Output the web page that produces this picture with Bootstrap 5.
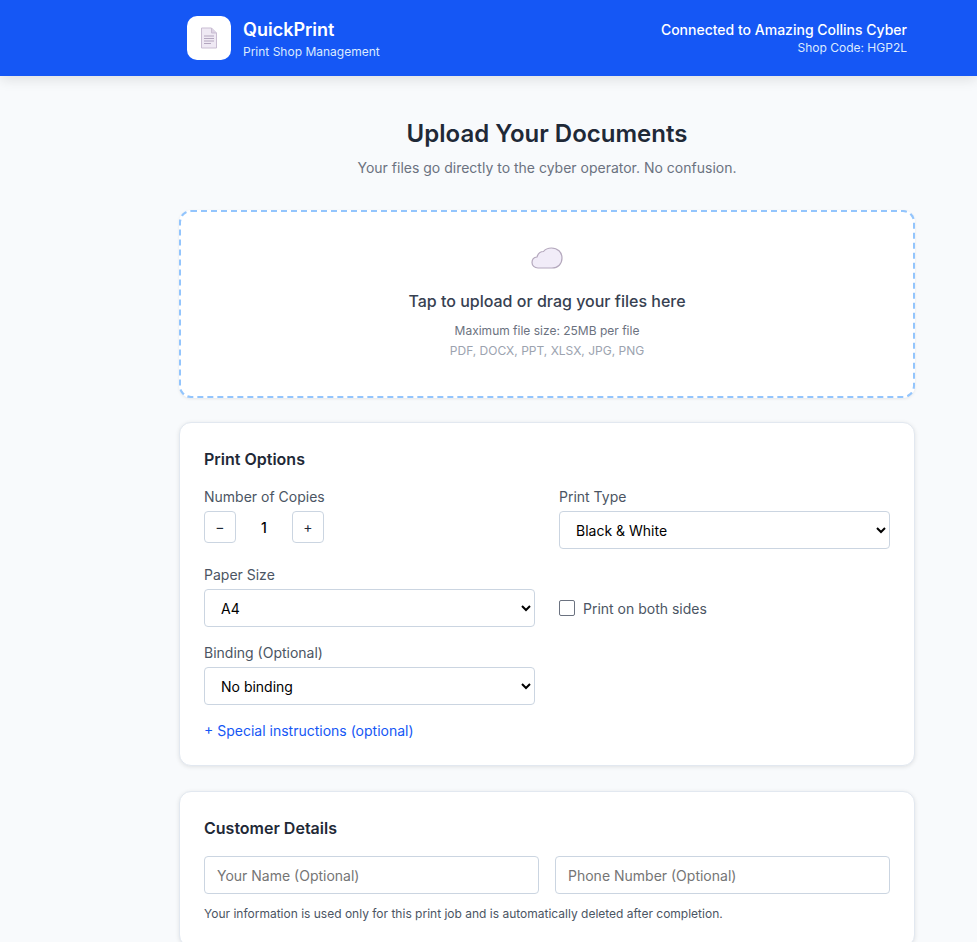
<!DOCTYPE html>
<html lang="en">
<head>
    <meta charset="UTF-8">
    <meta name="viewport" content="width=device-width, initial-scale=1.0">
    <title>QuickPrint</title>
    <link href="https://cdn.jsdelivr.net/npm/bootstrap@5.3.0/dist/css/bootstrap.min.css" rel="stylesheet">
    <style>
      html, body { height: 942px; overflow: hidden; }
      body { background: #f8fafc; font-family: Inter, "Noto Sans", sans-serif; color: #1f2937; }
      .top-bar { background: #1557f5; height: 76px; box-shadow: 0 4px 12px rgba(0,0,0,.1); }
      .top-inner { width: 720px; margin-left: 187px; height: 76px; }
      .logo-box { width: 44px; height: 44px; background: #fff; border-radius: 10px; }
      .brand-name { font-size: 18px; font-weight: 600; line-height: 28px; }
      .brand-sub { font-size: 12px; line-height: 16px; color: #dbeafe; }
      .conn-name { font-size: 14px; font-weight: 500; line-height: 20px; }
      .conn-code { font-size: 12px; line-height: 16px; color: #dbeafe; }
      .page-wrap { width: 736px; margin-left: 179px; padding-top: 42px; }
      .page-title { font-size: 24px; font-weight: 600; line-height: 32px; color: #1f2937; margin: 0 0 8px; }
      .page-sub { font-size: 14px; line-height: 20px; color: #6b7280; margin: 0 0 32px; }
      .drop-zone { height: 188px; background: #fff; border: 2px dashed #93c5fd; border-radius: 12px; box-shadow: 0 1px 3px rgba(0,0,0,.08); margin-bottom: 24px; }
      .drop-title { font-size: 16px; font-weight: 500; line-height: 24px; color: #374151; margin: 20px 0 8px; }
      .drop-line { font-size: 12px; line-height: 20px; color: #6b7280; }
      .drop-types { color: #9ca3af; }
      .panel { background: #fff; border: 1px solid #e2e8f0; border-radius: 12px; padding: 24px; box-shadow: 0 1px 4px rgba(0,0,0,.1); margin-bottom: 25px; }
      .panel-title { font-size: 16px; font-weight: 600; line-height: 24px; color: #1f2937; margin: 0 0 16px; }
      .options-grid { display: grid; grid-template-columns: 331px 331px; column-gap: 24px; row-gap: 16px; }
      .field-label { font-size: 14px; line-height: 20px; color: #4b5563; margin-bottom: 4px; display: block; }
      .count-btn { width: 32px; height: 32px; background: #fff; border: 1px solid #cbd5e1; border-radius: 4px; padding: 0; font-size: 14px; line-height: 1; color: #1f2937; }
      .count-val { width: 56px; text-align: center; font-size: 14px; font-weight: 500; color: #000; }
      .pick-box.form-select { height: 38px; font-size: 14px; color: #000; padding: 0 12px; border: 1px solid #cbd5e1; border-radius: 4px; background-image: none; appearance: auto; -webkit-appearance: auto; }
      .both-sides .form-check-input { width: 16px; height: 16px; margin: 0; border: 1px solid #6b7280; border-radius: 2px; float: none; }
      .both-sides label { font-size: 14px; color: #4b5563; }
      .extra-link { font-size: 14px; line-height: 20px; color: #1557f5; text-decoration: none; display: block; margin-top: 16px; }
      .text-box.form-control { height: 38px; font-size: 14px; padding: 0 12px; border: 1px solid #cbd5e1; border-radius: 4px; color: #000; }
      .text-box.form-control::placeholder { color: #757575; opacity: 1; }
      .small-note { font-size: 12px; line-height: 16px; color: #4b5563; margin: 12px 0 0; }
    </style>
</head>
<body>
    <header class="top-bar text-white">
        <div class="top-inner d-flex align-items-center justify-content-between">
            <div class="d-flex align-items-center gap-2">
                <div class="logo-box d-flex align-items-center justify-content-center me-1">
                    <svg width="18" height="22" viewBox="0 0 18 22">
                        <path d="M1.5 1h10l5 5v15h-15z" fill="#efe9f4" stroke="#c9bdd2"/>
                        <path d="M11.5 1v5h5" fill="#dcd2e4" stroke="#c9bdd2"/>
                        <path d="M4 9h10M4 11.5h10M4 14h10M4 16.500h7" stroke="#b3a6bf" stroke-width="1"/>
                    </svg>
                </div>
                <div>
                    <div class="brand-name">QuickPrint</div>
                    <div class="brand-sub">Print Shop Management</div>
                </div>
            </div>
            <div class="text-end">
                <div class="conn-name">Connected to Amazing Collins Cyber</div>
                <div class="conn-code">Shop Code: HGP2L</div>
            </div>
        </div>
    </header>

    <main class="page-wrap">
        <div class="text-center">
            <h1 class="page-title">Upload Your Documents</h1>
            <p class="page-sub">Your files go directly to the cyber operator. No confusion.</p>
        </div>

        <div class="drop-zone d-flex flex-column align-items-center justify-content-center text-center">
            <svg width="32" height="22" viewBox="0 0 32 22">
                <path d="M7 21C3.500 21 1 18.600 1 15.500 1 12.500 3.200 10.300 6 10 7 6.500 9.500 4.500 12.500 4.500 14.500 2 17.500 1 20.500 1 26.500 1 31 5 31 11 31 17 27 21 21 21z" fill="#f1ecf8" stroke="#b4a8bd" stroke-width="1.200"/>
            </svg>
            <div class="drop-title">Tap to upload or drag your files here</div>
            <div class="drop-line">Maximum file size: 25MB per file</div>
            <div class="drop-line drop-types">PDF, DOCX, PPT, XLSX, JPG, PNG</div>
        </div>

        <section class="panel">
            <h2 class="panel-title">Print Options</h2>
            <div class="options-grid">
                <div>
                    <span class="field-label">Number of Copies</span>
                    <div class="d-flex align-items-center">
                        <button type="button" class="count-btn">&minus;</button>
                        <span class="count-val">1</span>
                        <button type="button" class="count-btn">+</button>
                    </div>
                </div>
                <div>
                    <label class="field-label">Print Type</label>
                    <select class="form-select pick-box"><option>Black &amp; White</option></select>
                </div>
                <div>
                    <label class="field-label">Paper Size</label>
                    <select class="form-select pick-box"><option>A4</option></select>
                </div>
                <div class="both-sides d-flex align-items-center gap-2 pt-4">
                    <input class="form-check-input" type="checkbox" id="bothSides">
                    <label for="bothSides">Print on both sides</label>
                </div>
                <div>
                    <label class="field-label">Binding (Optional)</label>
                    <select class="form-select pick-box"><option>No binding</option></select>
                </div>
            </div>
            <a href="#" class="extra-link">+ Special instructions (optional)</a>
        </section>

        <section class="panel">
            <h2 class="panel-title">Customer Details</h2>
            <div class="row g-3">
                <div class="col-6"><input type="text" class="form-control text-box" placeholder="Your Name (Optional)"></div>
                <div class="col-6"><input type="text" class="form-control text-box" placeholder="Phone Number (Optional)"></div>
            </div>
            <p class="small-note">Your information is used only for this print job and is automatically deleted after completion.</p>
        </section>
    </main>
</body>
</html>
